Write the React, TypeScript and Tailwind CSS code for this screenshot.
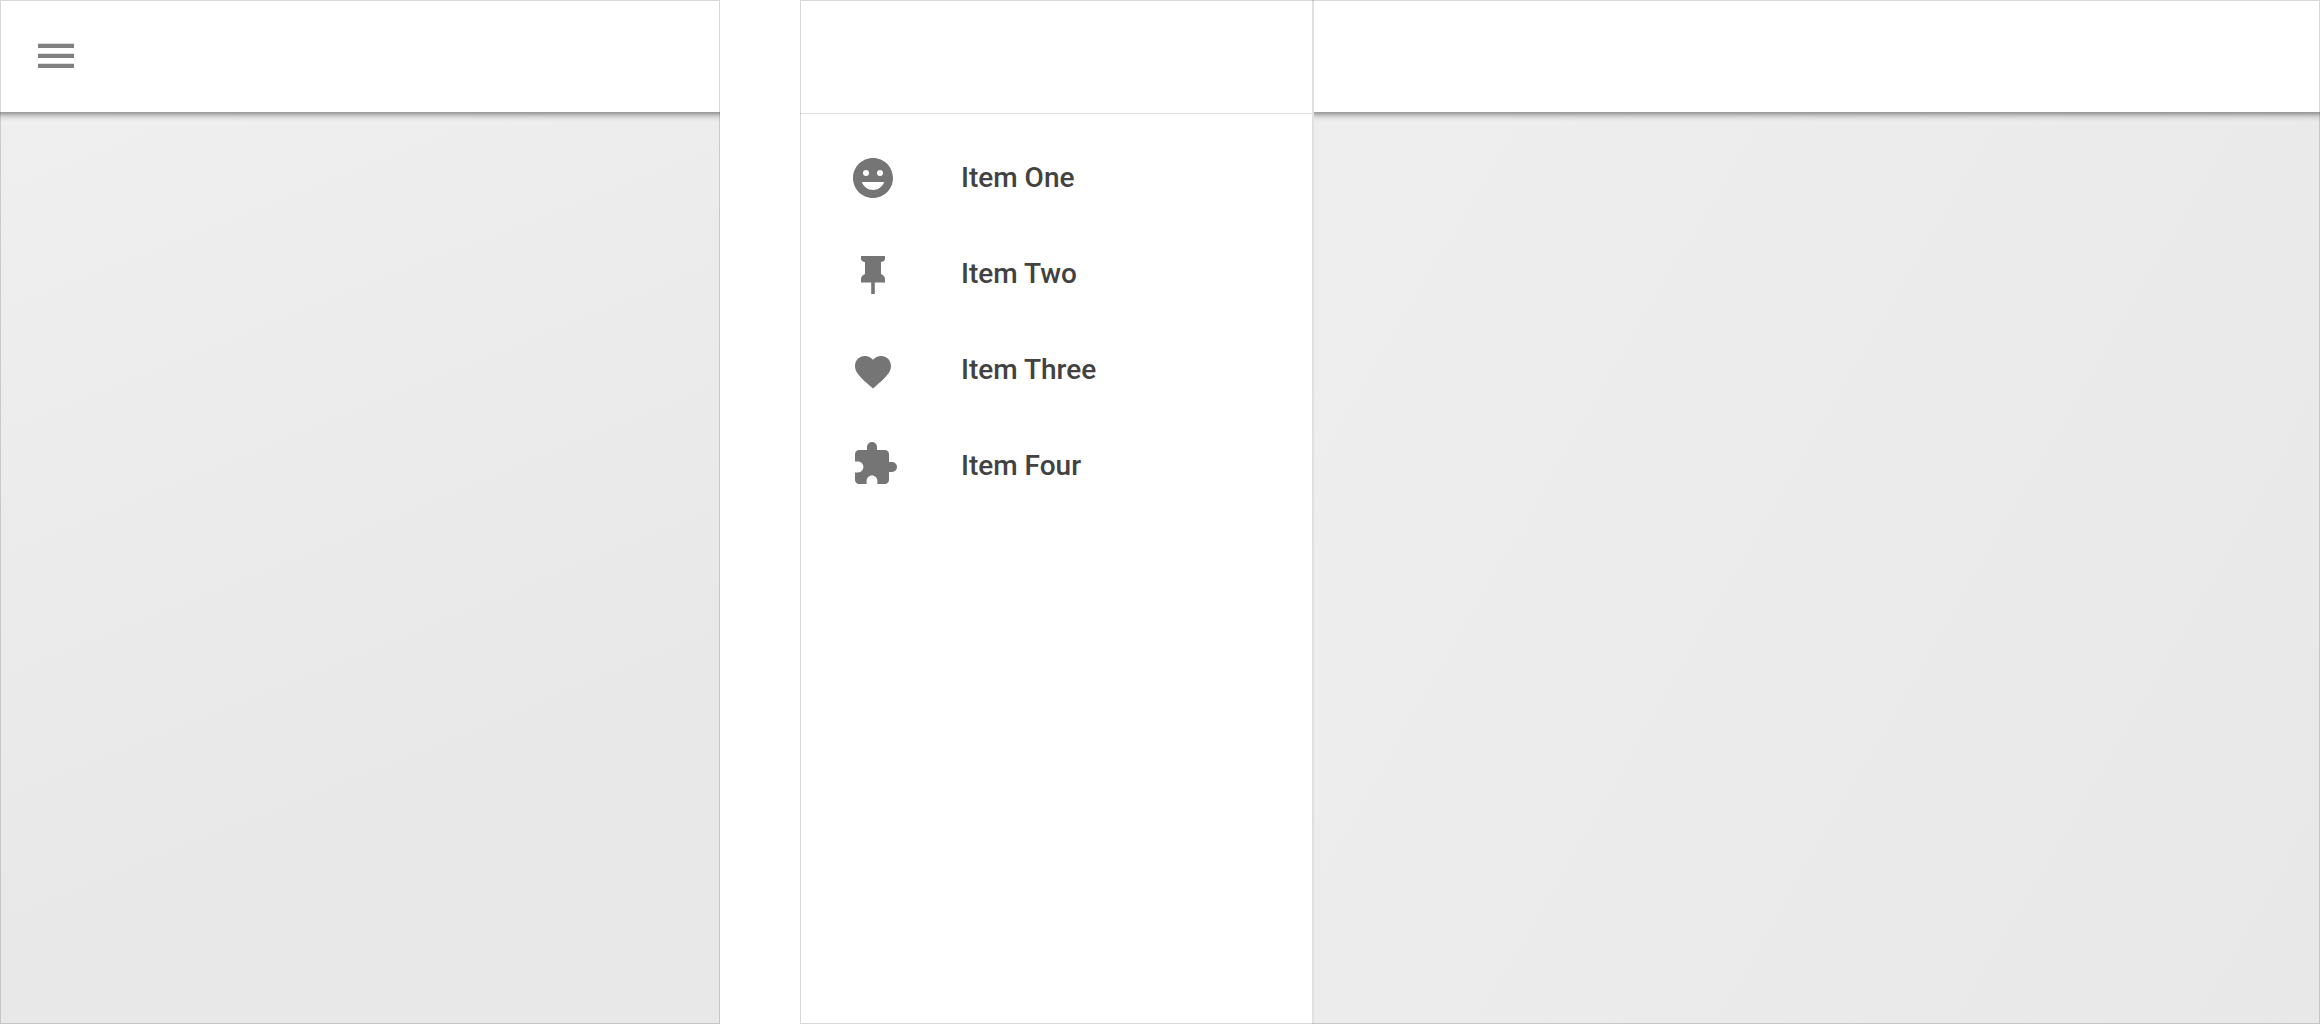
import React from "react";

type Item = { label: string; viewBox: string; path: string };

const items: Item[] = [
  {
    label: "Item One",
    viewBox: "0 0 24 24",
    path: "M12 2C6.47 2 2 6.47 2 12s4.47 10 10 10 10-4.47 10-10S17.53 2 12 2zM8.5 8a1.5 1.5 0 1 1 0 3 1.5 1.5 0 0 1 0-3zM15.5 8a1.5 1.5 0 1 1 0 3 1.5 1.5 0 0 1 0-3zM12 18c-2.6 0-4.7-1.7-5.6-4h11.2c-.9 2.3-3 4-5.6 4z",
  },
  {
    label: "Item Two",
    viewBox: "0 0 24 24",
    path: "M6 3h12v1.6c-.3.9-1 1.4-2 1.4v6c1.2.5 2 1.4 2 2.6v1.6h-5.1V22h-1.8v-5.8H6v-1.6c0-1.2.8-2.1 2-2.6V6c-1 0-1.7-.5-2-1.4V3z",
  },
  {
    label: "Item Three",
    viewBox: "-1.33 -2.56 26.67 26.67",
    path: "M12 21l-1.45-1.2C5.4 15.2 2 12.28 2 8.5 2 5.42 4.42 3 7.5 3c1.74 0 3.41.81 4.5 2.09C13.09 3.81 14.76 3 16.5 3 19.58 3 22 5.42 22 8.5c0 3.78-3.4 6.7-8.55 11.3L12 21z",
  },
  {
    label: "Item Four",
    viewBox: "-1 1 24 24",
    path: "M20.5 11H19V7c0-1.1-.9-2-2-2h-4V3.5a2.5 2.5 0 0 0-5 0V5H4c-1.1 0-1.99.9-1.99 2v3.8H3.5c1.49 0 2.7 1.21 2.7 2.7s-1.21 2.7-2.7 2.7H2V20c0 1.1.9 2 2 2h3.8v-1.5c0-1.49 1.21-2.7 2.7-2.7s2.7 1.21 2.7 2.7V22H17c1.1 0 2-.9 2-2v-4h1.5a2.5 2.5 0 0 0 0-5z",
  },
];

function AppBar({ children }: { children?: React.ReactNode }) {
  return (
    <header className="relative flex h-28 shrink-0 items-center bg-white px-8 shadow-[0_3px_5px_2px_rgba(0,0,0,0.2),0_1px_3px_1px_rgba(0,0,0,0.22)]">
      {children}
    </header>
  );
}

function CompactScreen() {
  return (
    <section className="relative flex flex-[720] basis-0 flex-col overflow-hidden bg-linear-158 from-[#efefef] from-10% to-[#e8e8e8] to-75% after:pointer-events-none after:absolute after:inset-0 after:border after:border-black/15">
      <AppBar>
        <button type="button" aria-label="Open navigation" className="size-12 text-[#808080]">
          <svg viewBox="0 0 24 24" className="size-12" fill="currentColor" aria-hidden="true">
            <path d="M3 5.87h18V8H3zM3 10.87h18V13H3zM3 15.87h18V18H3z" />
          </svg>
        </button>
      </AppBar>
    </section>
  );
}

function Drawer() {
  return (
    <aside className="flex w-[514px] shrink-0 flex-col border-r-2 border-[#e0e0e0] bg-white">
      <div className="h-[114px] border-b border-[#e0e0e0]" />
      <nav className="pt-4">
        <ul>
          {items.map((item) => (
            <li key={item.label}>
              <a
                href="#"
                className="flex h-24 items-center gap-16 pl-[49px] font-['Roboto',sans-serif] text-[28px] leading-8 font-medium text-[#424242]"
              >
                <svg viewBox={item.viewBox} className="size-12 shrink-0 text-[#757575]" fill="currentColor" aria-hidden="true">
                  <path fillRule="evenodd" d={item.path} />
                </svg>
                {item.label}
              </a>
            </li>
          ))}
        </ul>
      </nav>
    </aside>
  );
}

function WideScreen() {
  return (
    <section className="relative flex flex-[1520] basis-0 overflow-hidden after:pointer-events-none after:absolute after:inset-0 after:border after:border-black/15">
      <Drawer />
      <main className="flex min-w-0 flex-1 flex-col overflow-hidden bg-linear-120 from-[#eeeeee] from-10% to-[#e8e8e8]">
        <AppBar />
      </main>
    </section>
  );
}

export default function App() {
  return (
    <div className="flex min-h-screen gap-20 bg-white">
      <CompactScreen />
      <WideScreen />
    </div>
  );
}
